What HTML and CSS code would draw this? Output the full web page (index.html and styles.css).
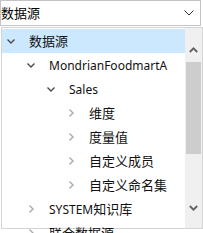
FILE: index.html
```html
<!DOCTYPE html>
<html>
<head>
<meta charset="utf-8">
<link rel="stylesheet" href="styles.css">
</head>
<body>
<div class="select">
  <span class="select-value">数据源</span>
  <svg class="select-arrow" width="10" height="6" viewBox="0 0 10 6"><path d="M0.5 0.5 L5 5 L9.5 0.5" fill="none" stroke="#333" stroke-width="1"/></svg>
</div>
<div class="panel">
  <div class="tree">
    <div class="row selected lvl0"><span class="tw open"><svg width="8" height="5" viewBox="0 0 8 5"><path d="M0.5 0.5 L4 4 L7.5 0.5" fill="none" stroke-width="1.4"/></svg></span><span class="label">数据源</span></div>
    <div class="row lvl1"><span class="tw open"><svg width="8" height="5" viewBox="0 0 8 5"><path d="M0.5 0.5 L4 4 L7.5 0.5" fill="none" stroke-width="1.4"/></svg></span><span class="label"><span class="en">MondrianFoodmartA</span></span></div>
    <div class="row lvl2"><span class="tw open"><svg width="8" height="5" viewBox="0 0 8 5"><path d="M0.5 0.5 L4 4 L7.5 0.5" fill="none" stroke-width="1.4"/></svg></span><span class="label"><span class="en">Sales</span></span></div>
    <div class="row lvl3"><span class="tw"><svg width="5" height="8" viewBox="0 0 5 8"><path d="M0.5 0.5 L4 4 L0.5 7.5" fill="none" stroke-width="1.4"/></svg></span><span class="label">维度</span></div>
    <div class="row lvl3"><span class="tw"><svg width="5" height="8" viewBox="0 0 5 8"><path d="M0.5 0.5 L4 4 L0.5 7.5" fill="none" stroke-width="1.4"/></svg></span><span class="label">度量值</span></div>
    <div class="row lvl3"><span class="tw"><svg width="5" height="8" viewBox="0 0 5 8"><path d="M0.5 0.5 L4 4 L0.5 7.5" fill="none" stroke-width="1.4"/></svg></span><span class="label">自定义成员</span></div>
    <div class="row lvl3"><span class="tw"><svg width="5" height="8" viewBox="0 0 5 8"><path d="M0.5 0.5 L4 4 L0.5 7.5" fill="none" stroke-width="1.4"/></svg></span><span class="label">自定义命名集</span></div>
    <div class="row lvl1"><span class="tw"><svg width="5" height="8" viewBox="0 0 5 8"><path d="M0.5 0.5 L4 4 L0.5 7.5" fill="none" stroke-width="1.4"/></svg></span><span class="label"><span class="en">SYSTEM</span>知识库</span></div>
    <div class="row lvl1"><span class="tw"><svg width="5" height="8" viewBox="0 0 5 8"><path d="M0.5 0.5 L4 4 L0.5 7.5" fill="none" stroke-width="1.4"/></svg></span><span class="label">联合数据源</span></div>
  </div>
  <div class="scrollbar">
    <div class="sb-btn sb-up"><svg width="9" height="6" viewBox="0 0 9 6"><path d="M0.8 5 L4.5 1.3 L8.2 5" fill="none" stroke="#606060" stroke-width="1.8"/></svg></div>
    <div class="sb-thumb"></div>
    <div class="sb-space"></div>
    <div class="sb-btn sb-down"><svg width="9" height="6" viewBox="0 0 9 6"><path d="M0.8 1 L4.5 4.7 L8.2 1" fill="none" stroke="#606060" stroke-width="1.8"/></svg></div>
  </div>
</div>
</body>
</html>
```

FILE: styles.css
```css
html, body {
  margin: 0;
  padding: 0;
  background: #ffffff;
}
body {
  font-family: "Noto Sans", "Noto Sans CJK SC", sans-serif;
  font-size: 13px;
  color: #000;
  width: 203px;
  height: 233px;
  overflow: hidden;
}
.select {
  box-sizing: border-box;
  width: 201px;
  height: 26px;
  border: 1px solid #c4c4c4;
  display: flex;
  align-items: center;
  justify-content: space-between;
  padding: 0 6px 0 0;
}
.select-value {
  font-family: "Noto Sans CJK SC", sans-serif;
  font-size: 13px;
  line-height: 24px;
}
.panel {
  box-sizing: border-box;
  margin: 1px 0 0 1px;
  width: 202px;
  height: 202px;
  border: 1px solid #d4d4d4;
  display: flex;
  align-items: flex-start;
}
.tree {
  flex: 1;
  box-sizing: border-box;
  height: 205px;
  overflow: hidden;
  padding-top: 1px;
  min-width: 0;
}
.row {
  height: 24px;
  display: flex;
  align-items: center;
  white-space: nowrap;
}
.row.selected {
  background: #cce8ff;
}
.lvl0 { padding-left: 5px; }
.lvl1 { padding-left: 25px; }
.lvl2 { padding-left: 45px; }
.lvl3 { padding-left: 65px; }
.tw {
  width: 22px;
  display: flex;
  align-items: center;
  justify-content: flex-start;
  flex: none;
}
.tw svg { display: block; stroke: #a8a8a8; }
.tw.open svg { stroke: #4a4a4a; margin-left: 0; }
.tw:not(.open) svg { margin-left: 2px; }
.label {
  color: #111;
  line-height: 24px;
}
.en {
  font-size: 12px;
}
.scrollbar {
  width: 17px;
  height: 200px;
  flex: none;
  background: #f0f0f0;
  display: flex;
  flex-direction: column;
}
.sb-btn {
  display: flex;
  justify-content: center;
  align-items: center;
  flex: none;
}
.sb-up { height: 34px; padding-top: 10px; box-sizing: border-box; }
.sb-thumb {
  height: 92px;
  margin: 0 1px;
  background: #cdcdcd;
  flex: none;
}
.sb-space { flex: 1; }
.sb-down { height: 40px; padding-bottom: 1px; box-sizing: border-box; }
```
